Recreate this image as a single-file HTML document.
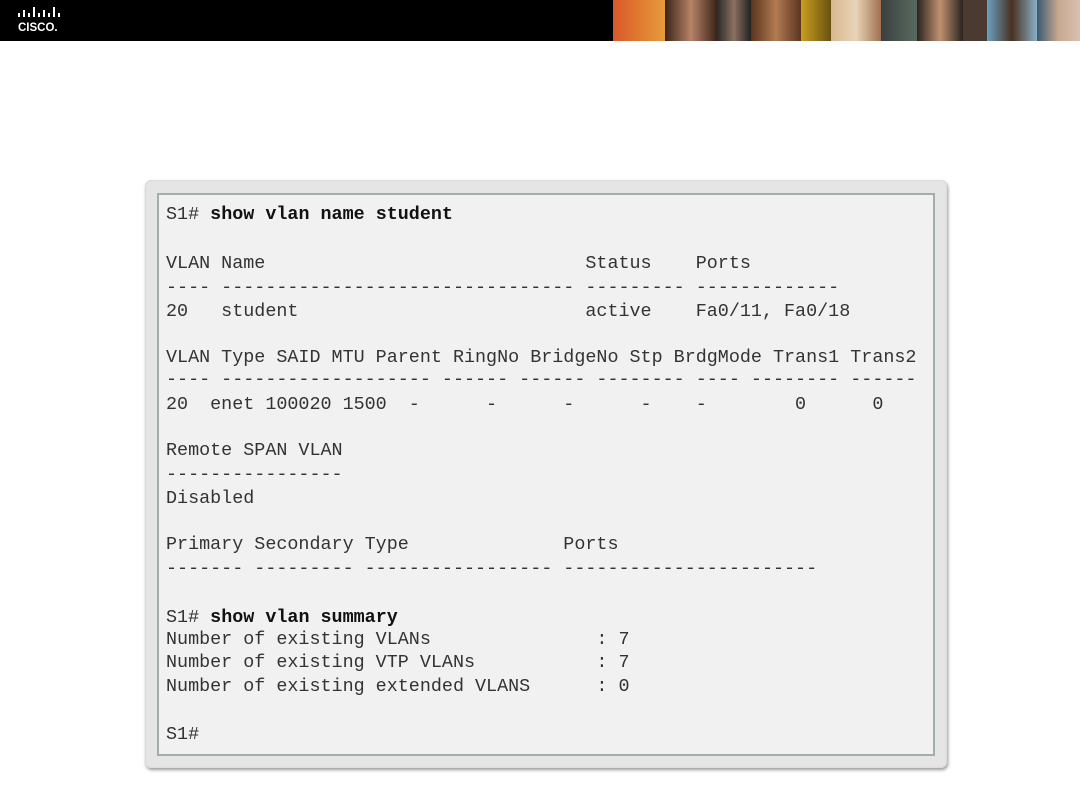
<!DOCTYPE html>
<html><head><meta charset="utf-8"><style>
html,body{margin:0;padding:0;width:1080px;height:810px;background:#fff;overflow:hidden;position:relative;font-family:"Liberation Sans",sans-serif}
.hdr{position:absolute;left:0;top:0;width:1080px;height:41px;background:#000}
.strip{position:absolute;left:613px;top:0;height:41px;width:467px;display:flex}
.strip div{height:41px}
.outer{position:absolute;left:145px;top:180px;width:802px;height:588px;background:#e6e5e5;border-radius:6px;box-shadow:1px 2px 3px #999, inset 0 0 2px #ccc}
.inner{position:absolute;left:157px;top:193px;width:774px;height:559px;background:#f1f1f1;border:2px solid #a3adab}
.l{position:absolute;left:166px;font-family:"Liberation Mono",monospace;font-size:18.4px;line-height:22px;color:#333;white-space:pre}
b{color:#111}
</style></head><body>
<div class="hdr">
<svg style="position:absolute;left:17px;top:7px" width="44" height="28" viewBox="0 0 44 28">
<g fill="#fff">
<rect x="1" y="6" width="2" height="4"/><rect x="6" y="3" width="2" height="7"/><rect x="11" y="6" width="2" height="4"/><rect x="16" y="0" width="2" height="10"/><rect x="21" y="6" width="2" height="4"/><rect x="26" y="3" width="2" height="7"/><rect x="31" y="6" width="2" height="4"/><rect x="36" y="0" width="2" height="10"/><rect x="41" y="6" width="2" height="4"/>
</g>
<text x="1" y="24" fill="#fff" font-family="Liberation Sans" font-weight="bold" font-size="11.5">CISCO.</text>
</svg>
<div class="strip">
<div style="width:52px;background:linear-gradient(90deg,#d9572a,#e69b3a)"></div>
<div style="width:52px;background:linear-gradient(90deg,#3a2418,#b78368,#3a2418)"></div>
<div style="width:34px;background:linear-gradient(90deg,#2a2a2a,#8a7060,#222)"></div>
<div style="width:50px;background:linear-gradient(90deg,#5a3520,#b27a52,#5a3520)"></div>
<div style="width:30px;background:linear-gradient(90deg,#c8a020,#6a5010)"></div>
<div style="width:50px;background:linear-gradient(90deg,#d8b890,#e8d4b8,#a07050)"></div>
<div style="width:36px;background:linear-gradient(90deg,#3a4040,#5a6a60)"></div>
<div style="width:46px;background:linear-gradient(90deg,#2a2420,#c09070,#2a2420)"></div>
<div style="width:24px;background:#4a3a30"></div>
<div style="width:50px;background:linear-gradient(90deg,#6aa0c0,#4a3020,#8ab0c8)"></div>
<div style="width:43px;background:linear-gradient(90deg,#3a5a70,#c8a890,#d8c0b0)"></div>
</div>
</div>
<div class="outer"></div>
<div class="inner"></div>
<div class="l" style="top:204px">S1# <b>show vlan name student</b></div>
<div class="l" style="top:253px">VLAN Name                             Status    Ports</div>
<div class="l" style="top:277px">---- -------------------------------- --------- -------------</div>
<div class="l" style="top:301px">20   student                          active    Fa0/11, Fa0/18</div>
<div class="l" style="top:347px">VLAN Type SAID MTU Parent RingNo BridgeNo Stp BrdgMode Trans1 Trans2</div>
<div class="l" style="top:369px">---- ------------------- ------ ------ -------- ---- -------- ------</div>
<div class="l" style="top:394px">20  enet 100020 1500  -      -      -      -    -        0      0</div>
<div class="l" style="top:440px">Remote SPAN VLAN</div>
<div class="l" style="top:464px">----------------</div>
<div class="l" style="top:488px">Disabled</div>
<div class="l" style="top:534px">Primary Secondary Type              Ports</div>
<div class="l" style="top:558px">------- --------- ----------------- -----------------------</div>
<div class="l" style="top:607px">S1# <b>show vlan summary</b></div>
<div class="l" style="top:629px">Number of existing VLANs               : 7</div>
<div class="l" style="top:652px">Number of existing VTP VLANs           : 7</div>
<div class="l" style="top:676px">Number of existing extended VLANS      : 0</div>
<div class="l" style="top:724px">S1#</div>
</body></html>
